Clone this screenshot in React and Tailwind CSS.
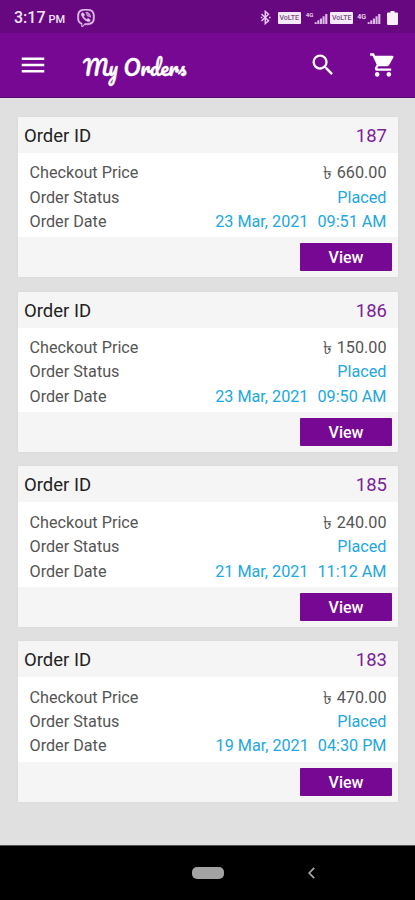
import { MdMenu, MdSearch, MdShoppingCart } from 'react-icons/md';
import { FaViber } from 'react-icons/fa';

const orders = [
  { id: '187', price: '660.00', status: 'Placed', day: '23 Mar, 2021', time: '09:51 AM' },
  { id: '186', price: '150.00', status: 'Placed', day: '23 Mar, 2021', time: '09:50 AM' },
  { id: '185', price: '240.00', status: 'Placed', day: '21 Mar, 2021', time: '11:12 AM' },
  { id: '183', price: '470.00', status: 'Placed', day: '19 Mar, 2021', time: '04:30 PM' },
];

function Bluetooth({ className }) {
  return (
    <svg viewBox="0 0 11 15" className={`h-[15px] w-[11px] ${className}`} fill="none" stroke="#e6c8ee" strokeWidth="1.5">
      <path d="M1.500 4l7 6.800L5.300 13.600V1.400l3.200 2.800L1.500 11" />
      <path d="M0.800 7.500h1.600M9 7.500h1.600" />
    </svg>
  );
}

function Signal({ className }) {
  return (
    <svg viewBox="0 0 14 11" className={`h-[10px] w-[14px] ${className}`} fill="#dcb8e6">
      <rect x="0" y="9" width="2.3" height="2" />
      <rect x="2.900" y="7" width="2.3" height="4" />
      <rect x="5.800" y="5" width="2.3" height="6" />
      <rect x="8.700" y="2.5" width="2.3" height="8.5" />
      <rect x="11.600" y="0" width="2.4" height="11" />
    </svg>
  );
}

function VolteBadge({ className }) {
  return (
    <span
      className={`flex h-3 w-[23px] items-center justify-center rounded-[1px] bg-[#f6e9f9] text-[7px] font-medium leading-none text-[#76507f] ${className}`}
    >
      VoLTE
    </span>
  );
}

function StatusBar() {
  return (
    <div className="flex h-[33px] items-center bg-[#670880] pl-[14px] pr-[17px] pt-[2px] text-[#f5e6f8]">
      <span className="text-[16px] font-medium leading-none">3:17</span>
      <span className="ml-[3px] mt-[3px] text-[11px] font-medium leading-none">PM</span>
      <FaViber className="ml-[12px] h-[18px] w-[18px] stroke-[#e4c4ec] stroke-[14px] text-[#e4c4ec]" />
      <Bluetooth className="ml-auto" />
      <VolteBadge className="ml-[7px] mt-px" />
      <span className="ml-[5px] -mt-[6px] text-[6px] font-medium leading-none">4G</span>
      <Signal className="ml-px mt-[3px]" />
      <VolteBadge className="ml-[2px] mt-px" />
      <span className="ml-[4px] text-[7px] font-medium leading-none">4G</span>
      <Signal className="ml-px mt-[3px]" />
      <svg viewBox="0 0 11 14" className="ml-[6px] h-[14px] w-[11px]" fill="#f9effb">
        <path d="M3.5 0h4v1.5H10a1 1 0 0 1 1 1V13a1 1 0 0 1-1 1H1a1 1 0 0 1-1-1V2.500a1 1 0 0 1 1-1h2.500z" />
      </svg>
    </div>
  );
}

function AppBar() {
  return (
    <header className="flex h-[65px] items-center border-b border-[#580a70] bg-[#760893] pl-[18px] pr-[18px] text-white">
      <MdMenu className="h-[30px] w-[30px]" />
      <h1 className="ml-[35px] mt-[4px] whitespace-nowrap font-['Pacifico','Liberation_Serif',cursive] text-[20.800px] font-normal leading-none [-webkit-text-stroke:0.300px_white]">
        My Orders
      </h1>
      <MdSearch className="ml-auto h-[28px] w-[28px]" />
      <MdShoppingCart className="ml-[32px] h-[28px] w-[28px]" />
    </header>
  );
}

function OrderCard({ order }) {
  return (
    <article className="bg-[#f5f5f5] shadow-[0_0_2px_rgba(0,0,0,0.06)]">
      <div className="flex h-[36px] items-center justify-between pl-[6px] pr-[11px] pt-[4px] text-[18.5px]">
        <h2 className="text-[#222222]">Order ID</h2>
        <span className="text-[#7b1f9a]">{order.id}</span>
      </div>
      <div className="h-[84.600px] bg-white pl-[11.500px] pr-[11.500px] pt-[8.500px] text-[16.200px] leading-[24.400px] text-[#555555]">
        <div className="flex justify-between">
          <span>Checkout Price</span>
          <span className="flex gap-[5px]">
            <span className="text-[18px]">৳</span>
            <span>{order.price}</span>
          </span>
        </div>
        <div className="flex justify-between">
          <span>Order Status</span>
          <span className="text-[#22a7e0]">{order.status}</span>
        </div>
        <div className="flex justify-between">
          <span>Order Date</span>
          <span className="flex gap-[9px] text-[#22a7e0]">
            <span>{order.day}</span>
            <span>{order.time}</span>
          </span>
        </div>
      </div>
      <div className="flex h-[40px] items-center justify-end pr-[6px]">
        <button type="button" className="h-[28px] w-[92px] rounded-[1px] bg-[#760893] pt-[2px] text-[16px] font-medium leading-none text-white">
          View
        </button>
      </div>
    </article>
  );
}

function App() {
  return (
    <div className="flex h-[900px] w-[415px] flex-col overflow-hidden bg-[#e0e0e0] font-['Roboto','Noto_Sans',sans-serif]">
      <StatusBar />
      <AppBar />
      <main className="flex flex-1 flex-col gap-[14.200px] pl-[18px] pr-[17px] pt-[18.800px]">
        {orders.map((order) => (
          <OrderCard key={order.id} order={order} />
        ))}
      </main>
      <nav className="flex h-[55px] items-center border-t border-[#555555] bg-black pl-[192px]">
        <span className="h-[12px] w-[32px] rounded-[5px] bg-[#a3a3a3]" />
        <svg viewBox="0 0 7 12" className="ml-[84px] h-[12px] w-[7px]" fill="none" stroke="#a3a3a3" strokeWidth="1.8">
          <path d="M6.200 0.800L1.200 6l5 5.200" />
        </svg>
      </nav>
    </div>
  );
}

export default App;
